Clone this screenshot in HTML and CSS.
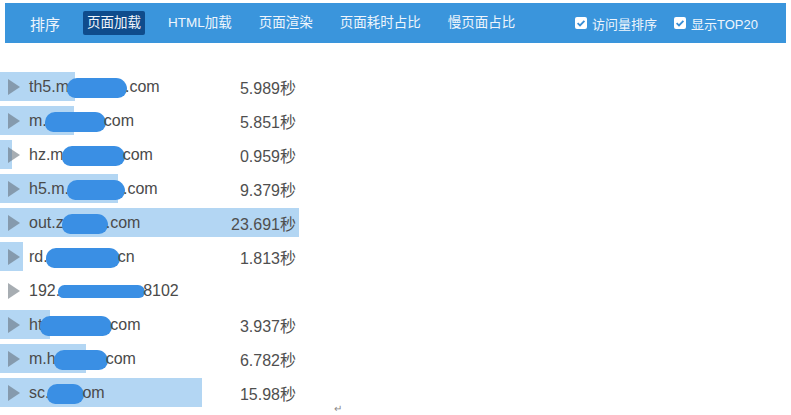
FILE: index.html
```html
<!DOCTYPE html>
<html lang="zh">
<head>
<meta charset="utf-8">
<link rel="stylesheet" href="styles.css">
</head>
<body>
<nav class="nav">
  <span class="nav-label">排序</span>
  <ul class="tabs">
    <li class="tab active">页面加载</li>
    <li class="tab">HTML加载</li>
    <li class="tab">页面渲染</li>
    <li class="tab">页面耗时占比</li>
    <li class="tab">慢页面占比</li>
  </ul>
  <div class="opts">
    <label class="opt"><span class="cb"><svg viewBox="0 0 12 12" width="12" height="12"><path d="M2.6 6.2 L5 8.4 L9.4 3.8" fill="none" stroke="#3a8fd6" stroke-width="1.8"/></svg></span>访问量排序</label>
    <label class="opt"><span class="cb"><svg viewBox="0 0 12 12" width="12" height="12"><path d="M2.6 6.2 L5 8.4 L9.4 3.8" fill="none" stroke="#3a8fd6" stroke-width="1.8"/></svg></span>显示TOP20</label>
  </div>
</nav>

<ul class="list">
  <li class="row" style="--w:75px"><span class="tri"></span><span class="host">th5.m<span class="blob" style="width:60px"></span>.com</span><span class="time">5.989秒</span></li>
  <li class="row" style="--w:74px"><span class="tri"></span><span class="host">m.<span class="blob" style="width:61px"></span>com</span><span class="time">5.851秒</span></li>
  <li class="row" style="--w:12px"><span class="tri"></span><span class="host">hz.m<span class="blob" style="width:63px"></span>com</span><span class="time">0.959秒</span></li>
  <li class="row" style="--w:118px"><span class="tri"></span><span class="host">h5.m.<span class="blob" style="width:58px"></span>.com</span><span class="time">9.379秒</span></li>
  <li class="row" style="--w:299px"><span class="tri"></span><span class="host">out.z<span class="blob" style="width:46px"></span>.com</span><span class="time">23.691秒</span></li>
  <li class="row" style="--w:23px"><span class="tri"></span><span class="host">rd.<span class="blob" style="width:74px"></span>cn</span><span class="time">1.813秒</span></li>
  <li class="row" style="--w:0px"><span class="tri"></span><span class="host">192.<span class="blob thin" style="width:87px"></span>8102</span><span class="time"></span></li>
  <li class="row" style="--w:50px"><span class="tri"></span><span class="host">ht<span class="blob" style="width:72px"></span>com</span><span class="time">3.937秒</span></li>
  <li class="row" style="--w:86px"><span class="tri"></span><span class="host">m.h<span class="blob" style="width:54px"></span>com</span><span class="time">6.782秒</span></li>
  <li class="row" style="--w:202px"><span class="tri"></span><span class="host">sc.<span class="blob" style="width:37px"></span>om</span><span class="time">15.98秒</span></li>
</ul>
<div class="mark">↵</div>
</body>
</html>
```

FILE: styles.css
```css
* { box-sizing: border-box; }
html, body { margin: 0; padding: 0; background: #fff; }
body {
  font-family: "Liberation Sans", "Noto Sans CJK SC", sans-serif;
  color: #444;
}

.nav {
  margin: 3px 5px 0 5px;
  height: 40px;
  background: #3a95dc;
  display: flex;
  align-items: center;
  padding-left: 25px;
  color: #eef5fc;
}
.nav-label {
  font-size: 15px;
  margin-right: 23px;
}
.tabs {
  list-style: none;
  margin: 0;
  padding: 0;
  display: flex;
  gap: 19px;
}
.tab {
  font-size: 13.5px;
  height: 24px;
  line-height: 24px;
  padding: 0 4px;
  white-space: nowrap;
}
.tab.active {
  background: #0f4c8c;
  border-radius: 2px;
  color: #f2f6fb;
}
.opts {
  margin-left: auto;
  padding-right: 28px;
  display: flex;
  gap: 17px;
}
.opt {
  display: flex;
  align-items: center;
  font-size: 13px;
  white-space: nowrap;
}
.cb {
  width: 12px;
  height: 12px;
  background: #fff;
  border-radius: 2px;
  margin-right: 5px;
  display: flex;
}

.list {
  list-style: none;
  margin: 29px 0 0 0;
  padding: 0;
  width: 300px;
}
.row {
  height: 29px;
  margin-bottom: 5px;
  display: flex;
  align-items: center;
  font-size: 16px;
  padding-right: 4px;
  background: linear-gradient(90deg, #b3d6f3 var(--w), transparent 0);
}
.tri {
  width: 0;
  height: 0;
  border-top: 8px solid transparent;
  border-bottom: 8px solid transparent;
  border-left: 12px solid rgba(95, 105, 115, 0.55);
  margin-left: 8px;
  margin-right: 9px;
}
.host {
  color: #4a4a4a;
  white-space: nowrap;
  display: flex;
  align-items: center;
}
.blob {
  display: inline-block;
  height: 20px;
  background: #3a8fe4;
  border-radius: 11px 12px 10px 9px;
  margin: 2px -2px 0 -2px;
}
.blob.thin { height: 13px; }
.time {
  margin-left: auto;
  color: #4f4f4f;
  white-space: nowrap;
}
.mark {
  margin: -8px 0 0 334px;
  font-size: 10px;
  line-height: 10px;
  color: #888;
}
```
